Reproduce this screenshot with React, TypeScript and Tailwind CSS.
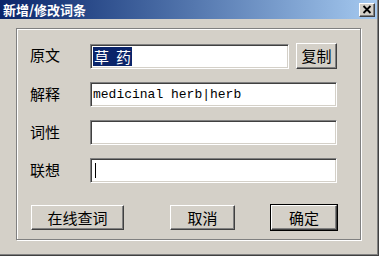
import React from 'react';

const cjk = "font-['SimSun','Noto_Sans_CJK_SC',sans-serif]";

const Sunken: React.FC<{ className?: string; children?: React.ReactNode }> = ({ className = '', children }) => (
  <div
    className={`h-[25px] bg-white border border-t-[#808080] border-l-[#808080] border-b-white border-r-white shadow-[inset_1px_1px_0_#404040,inset_-1px_-1px_0_#d4d0c8] flex items-center overflow-hidden ${className}`}
  >
    {children}
  </div>
);

const Button: React.FC<{ label: string; className?: string; isDefault?: boolean }> = ({ label, className = '', isDefault }) => {
  const face = (
    <div className="flex-1 flex items-center justify-center bg-[#d4d0c8] border border-t-white border-l-white border-r-[#404040] border-b-[#404040] shadow-[inset_-1px_-1px_0_#808080] text-[15px] text-black">
      <span className={`leading-none pb-[1px] ${cjk}`}>{label}</span>
    </div>
  );
  if (isDefault) {
    return <div className={`flex border border-black ${className}`}>{face}</div>;
  }
  return <div className={`flex ${className}`}>{face}</div>;
};

const Label: React.FC<{ text: string }> = ({ text }) => (
  <div className={`w-[60px] text-[15px] text-black leading-none pb-[3px] ${cjk}`}>{text}</div>
);

export default function App() {
  return (
    <div className="w-[379px] h-[256px] bg-[#d4d0c8] flex flex-col border-r border-b border-[#404040]">
      <div className="flex-1 flex flex-col border-r border-b border-[#808080]">
        {/* title bar */}
        <div className="h-[19px] flex items-center justify-between bg-linear-to-r from-[#0a246a] to-[#a6caf0] pl-[3px] pr-[2px]">
          <span className={`text-white font-bold text-[13px] leading-none ${cjk}`}>新增/修改词条</span>
          <div className="w-[16px] h-[14px] flex items-center justify-center bg-[#d4d0c8] border border-t-white border-l-white border-r-[#404040] border-b-[#404040] shadow-[inset_-1px_-1px_0_#808080]">
            <svg width="10" height="9" viewBox="0 0 10 9">
              <path d="M1.5 1 L8.5 8 M8.5 1 L1.5 8" stroke="#000" strokeWidth="1.8" />
            </svg>
          </div>
        </div>

        {/* group box */}
        <div className="ml-[16px] mt-[9px] w-[345px] h-[212px] border border-[#808080] shadow-[inset_1px_1px_0_#fff,1px_1px_0_#fff] pl-[13px] pt-[14px]">
          <div className="flex items-center">
            <Label text="原文" />
            <Sunken className="w-[199px] pl-[2px]">
              <span className={`flex items-center bg-[#0a246a] text-white text-[15px] leading-[19px] px-[1px] ${cjk}`}>
                <span>草</span>
                <span className="inline-block w-[7px]" />
                <span>药</span>
              </span>
            </Sunken>
            <Button label="复制" className="ml-[7px] w-[41px] h-[26px]" />
          </div>
          <div className="flex items-center mt-[13px]">
            <Label text="解释" />
            <Sunken className="w-[247px] pl-[2px]">
              <span className="font-['Liberation_Mono',monospace] text-[13px] text-black whitespace-pre">medicinal herb|herb</span>
            </Sunken>
          </div>
          <div className="flex items-center mt-[13px]">
            <Label text="词性" />
            <Sunken className="w-[247px]" />
          </div>
          <div className="flex items-center mt-[13px]">
            <Label text="联想" />
            <Sunken className="w-[247px] pl-[4px]">
              <div className="w-px h-[15px] bg-black" />
            </Sunken>
          </div>
          <div className="flex items-center mt-[21px]">
            <Button label="在线查词" className="ml-[1px] w-[93px] h-[25px]" />
            <Button label="取消" className="ml-[46px] w-[65px] h-[25px]" />
            <Button label="确定" isDefault className="ml-[35px] w-[68px] h-[27px]" />
          </div>
        </div>
      </div>
    </div>
  );
}
